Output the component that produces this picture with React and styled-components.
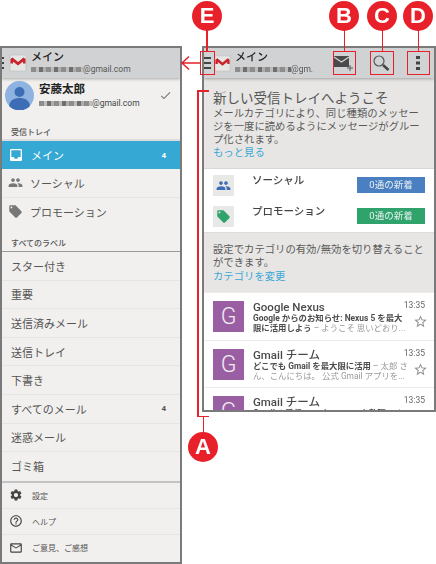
import React from 'react';
import styled, { createGlobalStyle } from 'styled-components';
import {
  MdPeople, MdLocalOffer, MdSettings, MdHelpOutline, MdMailOutline, MdInbox, MdCheck, MdStarBorder,
} from 'react-icons/md';

const Global = createGlobalStyle`
  html, body { margin: 0; padding: 0; background: #fff; }
  body { font-family: Roboto, "Noto Sans CJK JP", sans-serif; color: #444; }
  * { box-sizing: border-box; }
`;

const Stage = styled.div`
  position: relative;
  width: 436px;
  height: 564px;
  overflow: hidden;
  padding-top: 46px;
  display: flex;
  align-items: flex-start;
  gap: 20px;
  filter: blur(0.3px);
`;

const Phone = styled.div`
  width: ${(p) => p.$w}px;
  height: ${(p) => p.$h}px;
  border: 2px solid #7a7a7a;
  background: #f1f0ee;
  display: flex;
  flex-direction: column;
  overflow: hidden;
  flex-shrink: 0;
`;

const Header = styled.div`
  height: 30px;
  flex-shrink: 0;
  display: flex;
  align-items: center;
  background: #d1d2d4;
  box-shadow: 0 1px 3px rgba(0, 0, 0, 0.3);
  position: relative;
`;

const Bars = styled.div`
  width: ${(p) => p.$w}px;
  margin-right: ${(p) => p.$gap}px;
  display: flex;
  flex-direction: column;
  gap: 3px;
  flex-shrink: 0;
  span {
    display: block;
    height: 2px;
    background: #444;
  }
`;

const HeaderText = styled.div`
  margin-left: 4px;
  display: flex;
  flex-direction: column;
  flex: 1;
  min-width: 0;
`;

const HeaderTitle = styled.div`
  font-size: 11px;
  line-height: 13px;
  font-weight: 500;
  color: #222;
`;

const HeaderMail = styled.div`
  font-size: 8.5px;
  line-height: 11px;
  color: #555;
  display: flex;
  align-items: center;
`;

const Redacted = styled.span`
  display: inline-block;
  width: ${(p) => p.$w}px;
  height: 5px;
  background: repeating-linear-gradient(90deg, #8d8d8d 0 5px, #bdbdbd 5px 8px, #6f6f6f 8px 12px, #adadad 12px 15px);
  filter: blur(0.7px);
`;

const Actions = styled.div`
  display: flex;
  gap: 13px;
  padding-right: 4px;
`;

const ActionSlot = styled.div`
  width: 24px;
  height: 24px;
  display: flex;
  align-items: center;
  justify-content: center;
`;

const Account = styled.div`
  height: 45px;
  flex-shrink: 0;
  display: flex;
  align-items: flex-start;
  padding: 3px 8px 0 3px;
  gap: 5px;
  svg.check { margin-top: 8px; }
`;

const AccountText = styled.div`
  flex: 1;
  display: flex;
  flex-direction: column;
  gap: 2px;
  padding-top: 1px;
`;

const AccountName = styled.div`
  font-size: 11.5px;
  line-height: 14px;
  font-weight: 700;
  color: #222;
`;

const AccountMail = styled.div`
  font-size: 8.5px;
  line-height: 11px;
  color: #444;
  display: flex;
  align-items: center;
`;

const SectionLabel = styled.div`
  height: ${(p) => p.$h}px;
  flex-shrink: 0;
  display: flex;
  align-items: flex-end;
  font-size: 8px;
  line-height: 12px;
  font-weight: 500;
  color: #555;
  padding: 0 0 ${(p) => p.$bottom}px 9px;
  border-bottom: ${(p) => p.$line};
`;

const NavRow = styled.div`
  height: ${(p) => p.$h}px;
  flex-shrink: 0;
  display: flex;
  align-items: center;
  padding: 0 14px 0 ${(p) => (p.$icon ? 6 : 9)}px;
  gap: 7px;
  font-size: 11px;
  color: ${(p) => (p.$active ? '#fff' : '#555')};
  background: ${(p) => (p.$active ? '#35a8d3' : 'transparent')};
  border-bottom: ${(p) => (p.$active || p.$bare ? 'none' : '1px solid #e6e5e3')};
  svg { flex-shrink: 0; }
`;

const NavLabel = styled.span`
  flex: 1;
`;

const Count = styled.span`
  font-size: 8px;
  font-weight: 700;
`;

const Thick = styled.div`
  height: 2px;
  flex-shrink: 0;
  background: #c2c3c4;
`;

const FootRow = styled.div`
  height: 26px;
  flex-shrink: 0;
  display: flex;
  align-items: center;
  padding-left: 7px;
  gap: 9px;
  font-size: 8px;
  color: #555;
  border-bottom: ${(p) => (p.$last ? 'none' : '1px solid #e6e5e3')};
`;

const Welcome = styled.div`
  height: 91px;
  flex-shrink: 0;
  padding: 11px 8px 0 9px;
  background: #e7e6e4;
  border-bottom: 1px solid #d8d8d6;
`;

const WelcomeTitle = styled.div`
  font-size: 13.5px;
  line-height: 18px;
  margin-bottom: 1px;
  color: #555;
  white-space: nowrap;
`;

const Copy = styled.div`
  font-size: 10.35px;
  line-height: 12.8px;
  color: #5a5a5a;
  white-space: nowrap;
`;

const Linked = styled.div`
  font-size: 10.35px;
  line-height: 13px;
  color: #3ba8d6;
`;

const Categories = styled.div`
  height: 63px;
  flex-shrink: 0;
  background: #fff;
  padding: 6px 9px 0;
  display: flex;
  flex-direction: column;
  gap: 10px;
`;

const CategoryRow = styled.div`
  height: 21px;
  display: flex;
  position: relative;
`;

const CategoryIcon = styled.div`
  width: 21px;
  height: 21px;
  background: #e8e8e7;
  display: flex;
  align-items: center;
  justify-content: center;
  color: ${(p) => p.$color};
`;

const CategoryName = styled.div`
  flex: 1;
  margin-left: 18px;
  font-size: 10.5px;
  line-height: 12px;
  font-weight: 500;
  color: #444;
`;

const Tag = styled.div`
  width: 68px;
  height: 16px;
  margin: 2px 0 0;
  background: ${(p) => p.$color};
  color: #e9f2f2;
  font-size: 9.5px;
  line-height: 16px;
  text-align: center;
`;

const Settings = styled.div`
  height: 60px;
  flex-shrink: 0;
  background: #e7e6e4;
  padding: 11px 8px 0 9px;
  border-top: 1px solid #dcdcda;
`;

const Mail = styled.div`
  height: 47.5px;
  flex-shrink: 0;
  background: #fff;
  padding: 8px 9px 0;
  display: flex;
  gap: 9px;
  border-top: 1px solid #ebebeb;
`;

const MailAvatar = styled.div`
  width: 31px;
  height: 31px;
  flex-shrink: 0;
  background: #9a5fa3;
  color: #f3e9f4;
  font-size: 23px;
  font-weight: 300;
  line-height: 31px;
  text-align: center;
`;

const MailBody = styled.div`
  flex: 1;
  min-width: 0;
  position: relative;
`;

const MailHead = styled.div`
  display: flex;
  justify-content: space-between;
  height: 12px;
`;

const MailFrom = styled.div`
  font-size: 11.5px;
  line-height: 13px;
  font-weight: 500;
  color: #4a4a4a;
`;

const MailTime = styled.div`
  font-size: 8.5px;
  line-height: 9px;
  color: #666;
`;

const Snippet = styled.div`
  width: 154px;
  font-size: 8.4px;
  line-height: 10px;
  color: #999;
  white-space: nowrap;
  b {
    font-weight: 700;
    color: #4c4c4c;
  }
`;

const StarSlot = styled.div`
  position: absolute;
  right: -3px;
  top: 13px;
  color: #8e8e8e;
  display: flex;
`;

const Badge = styled.div`
  position: absolute;
  left: ${(p) => p.$x - 15}px;
  top: ${(p) => p.$y - 15}px;
  width: 30px;
  height: 30px;
  border-radius: 50%;
  background: #e8202a;
  color: #fff;
  font-family: "Liberation Sans", sans-serif;
  font-weight: 700;
  font-size: 22px;
  line-height: 30px;
  text-align: center;
`;

const RedBox = styled.div`
  position: absolute;
  left: ${(p) => p.$x}px;
  top: 51px;
  width: ${(p) => p.$w}px;
  height: 24px;
  border: 1.5px solid #e8202a;
`;

const Stem = styled.div`
  position: absolute;
  left: ${(p) => p.$x}px;
  top: ${(p) => p.$y}px;
  width: ${(p) => p.$w || 1.5}px;
  height: ${(p) => p.$h || 1.5}px;
  background: #e8202a;
`;

const Arrow = styled.svg`
  position: absolute;
  left: 180px;
  top: 55px;
`;

function GmailMark({ size }) {
  return (
    <svg width={size} height={size} viewBox="0 0 18 18" style={{ flexShrink: 0 }}>
      <path d="M1 1h16v16H1z" fill="#e6e6e4" stroke="#bdbdbb" strokeWidth="0.6" />
      <path d="M1.5 5 L3.5 3.5 L9 8 L14.5 3.5 L16.5 5 V9.5 H14 V7.5 L9 11.5 L4 7.5 V9.5 H1.5 Z" fill="#c8242c" />
    </svg>
  );
}

function Avatar() {
  return (
    <svg width="29" height="29" viewBox="0 0 29 29" style={{ flexShrink: 0 }}>
      <circle cx="14.5" cy="14.5" r="14.5" fill="#8fb3e0" />
      <circle cx="14.5" cy="11" r="5" fill="#3d6db5" />
      <path d="M4 25c1-6 5-8 10.5-8S24 19 25 25a14.5 14.5 0 0 1-21 0z" fill="#3d6db5" />
    </svg>
  );
}

const topNav = [
  { label: 'ソーシャル', Icon: MdPeople },
  { label: 'プロモーション', Icon: MdLocalOffer },
];

const labels = [
  { label: 'スター付き' },
  { label: '重要' },
  { label: '送信済みメール' },
  { label: '送信トレイ' },
  { label: '下書き' },
  { label: 'すべてのメール', count: 4 },
  { label: '迷惑メール' },
  { label: 'ゴミ箱', bare: true },
];

const footer = [
  { label: '設定', Icon: MdSettings },
  { label: 'ヘルプ', Icon: MdHelpOutline },
  { label: 'ご意見、ご感想', Icon: MdMailOutline, last: true },
];

const mails = [
  {
    from: 'Google Nexus',
    bold: ['Google からのお知らせ: Nexus 5 を最大', '限に活用しよう'],
    rest: ['', ' – ようこそ 思いどおり...'],
  },
  {
    from: 'Gmail チーム',
    bold: ['どこでも Gmail を最大限に活用', ''],
    rest: [' – 太郎 さ', 'ん、こんにちは。 公式 Gmail アプリを...'],
  },
  {
    from: 'Gmail チーム',
    bold: ['Gmail の受信トレイでメールを整理', ''],
    rest: [' – 太', '郎 さん、こんにちは。'],
  },
];

export default function App() {
  return (
    <>
      <Global />
      <Stage>
        <Phone $w={182} $h={518}>
          <Header>
            <Bars $w={2} $gap={5}>
              <span />
              <span />
              <span />
            </Bars>
            <GmailMark size={18} />
            <HeaderText>
              <HeaderTitle>メイン</HeaderTitle>
              <HeaderMail>
                <Redacted $w={52} />
                @gmail.com
              </HeaderMail>
            </HeaderText>
          </Header>
          <Account>
            <Avatar />
            <AccountText>
              <AccountName>安藤太郎</AccountName>
              <AccountMail>
                <Redacted $w={53} />
                @gmail.com
              </AccountMail>
            </AccountText>
            <MdCheck className="check" size={13} color="#777" />
          </Account>
          <SectionLabel $h={18} $bottom={0} $line="2px solid #dedddb">受信トレイ</SectionLabel>
          <NavRow $h={28} $icon $active>
            <MdInbox size={16} />
            <NavLabel>メイン</NavLabel>
            <Count>4</Count>
          </NavRow>
          {topNav.map(({ label, Icon }, i) => (
            <NavRow key={label} $h={28.5} $icon $bare={i === 1}>
              <Icon size={15} color="#777" />
              <NavLabel>{label}</NavLabel>
            </NavRow>
          ))}
          <SectionLabel $h={26} $bottom={1} $line="1px solid #9a9a9a">すべてのラベル</SectionLabel>
          {labels.map((r) => (
            <NavRow key={r.label} $h={28.6} $bare={r.bare}>
              <NavLabel>{r.label}</NavLabel>
              {r.count && <Count>{r.count}</Count>}
            </NavRow>
          ))}
          <Thick />
          {footer.map(({ label, Icon, last }) => (
            <FootRow key={label} $last={last}>
              <Icon size={14} color="#444" />
              {label}
            </FootRow>
          ))}
        </Phone>

        <Phone $w={234} $h={366}>
          <Header>
            <Bars $w={7} $gap={3}>
              <span />
              <span />
              <span />
            </Bars>
            <GmailMark size={17} />
            <HeaderText>
              <HeaderTitle>メイン</HeaderTitle>
              <HeaderMail>
                <Redacted $w={56} />
                @gm.
              </HeaderMail>
            </HeaderText>
            <Actions>
              <ActionSlot>
                <svg width="20" height="18" viewBox="0 0 20 18">
                  <path d="M0 2h15v11H0z" fill="#4a4a4a" />
                  <path d="M0 3l7.5 5L15 3" fill="none" stroke="#d1d2d4" strokeWidth="1.2" />
                  <path d="M16 11v6M13 14h6" stroke="#5a5a5a" strokeWidth="1" />
                </svg>
              </ActionSlot>
              <ActionSlot>
                <svg width="18" height="18" viewBox="0 0 18 18">
                  <circle cx="7" cy="7" r="5" fill="none" stroke="#555" strokeWidth="1.2" />
                  <path d="M11 11l5.5 5" stroke="#444" strokeWidth="2.4" />
                </svg>
              </ActionSlot>
              <ActionSlot>
                <svg width="4" height="14" viewBox="0 0 4 14">
                  <path d="M0 0h4v3H0zM0 5.5h4v3H0zM0 11h4v3H0z" fill="#444" />
                </svg>
              </ActionSlot>
            </Actions>
          </Header>
          <Welcome>
            <WelcomeTitle>新しい受信トレイへようこそ</WelcomeTitle>
            <Copy>メールカテゴリにより、同じ種類のメッセー</Copy>
            <Copy>ジを一度に読めるようにメッセージがグルー</Copy>
            <Copy>プ化されます。</Copy>
            <Linked>もっと見る</Linked>
          </Welcome>
          <Categories>
            <CategoryRow>
              <CategoryIcon $color="#3d6db5"><MdPeople size={15} /></CategoryIcon>
              <CategoryName>ソーシャル</CategoryName>
              <Tag $color="#4a7fc1">0通の新着</Tag>
            </CategoryRow>
            <CategoryRow>
              <CategoryIcon $color="#2fa36b"><MdLocalOffer size={15} /></CategoryIcon>
              <CategoryName>プロモーション</CategoryName>
              <Tag $color="#2fa36b">0通の新着</Tag>
            </CategoryRow>
          </Categories>
          <Settings>
            <Copy>設定でカテゴリの有効/無効を切り替えること</Copy>
            <Copy>ができます。</Copy>
            <Linked>カテゴリを変更</Linked>
          </Settings>
          {mails.map((m, i) => (
            <Mail key={i}>
              <MailAvatar>G</MailAvatar>
              <MailBody>
                <MailHead>
                  <MailFrom>{m.from}</MailFrom>
                  <MailTime>13:35</MailTime>
                </MailHead>
                <Snippet><b>{m.bold[0]}</b>{m.rest[0]}</Snippet>
                <Snippet><b>{m.bold[1]}</b>{m.rest[1]}</Snippet>
                <StarSlot><MdStarBorder size={15} /></StarSlot>
              </MailBody>
            </Mail>
          ))}
        </Phone>

        <Stem $x={206} $y={30} $h={21} />
        <Stem $x={343.5} $y={30} $h={21} />
        <Stem $x={381.5} $y={30} $h={21} />
        <Stem $x={417.5} $y={30} $h={21} />
        <RedBox $x={200} $w={15} />
        <RedBox $x={333} $w={23} />
        <RedBox $x={370} $w={24} />
        <RedBox $x={407} $w={23} />
        <Badge $x={207} $y={16}>E</Badge>
        <Badge $x={344} $y={16}>B</Badge>
        <Badge $x={382} $y={16}>C</Badge>
        <Badge $x={418} $y={16}>D</Badge>
        <Arrow width="21" height="16" viewBox="0 0 21 16">
          <path d="M20 8H2M9 1.5L2 8l7 6.5" fill="none" stroke="#e8202a" strokeWidth="1.5" />
        </Arrow>
        <Stem $x={197} $y={90} $h={327} />
        <Stem $x={197} $y={90} $w={12} />
        <Stem $x={197} $y={415.5} $w={12} />
        <Stem $x={202.5} $y={416} $h={17} />
        <Badge $x={203} $y={447}>A</Badge>
      </Stage>
    </>
  );
}
